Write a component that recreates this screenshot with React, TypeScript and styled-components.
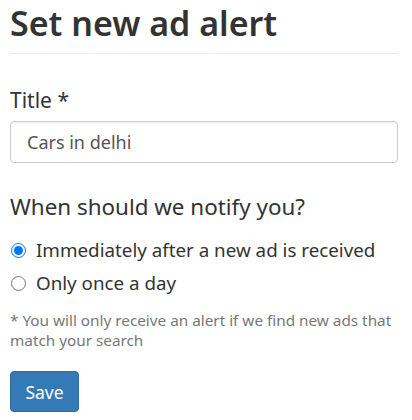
import React, { useState } from 'react'
import styled, { createGlobalStyle } from 'styled-components'

const GlobalStyle = createGlobalStyle`
  body {
    margin: 0;
    background: #fff;
    font-family: "Noto Sans", "Open Sans", sans-serif;
    color: #333;
  }
`

const Page = styled.div`
  padding: 0 14px 0 10px;
`

const Heading = styled.h1`
  margin: 0;
  padding: 3px 0 10px;
  font-size: 34px;
  font-weight: 600;
  line-height: 40px;
  color: #333;
  border-bottom: 1px solid #eee;
`

const Form = styled.form`
  display: flex;
  flex-direction: column;
  padding-top: 32px;
`

const Label = styled.label`
  font-size: 21px;
  line-height: 28px;
  margin-bottom: 7px;
`

const Input = styled.input`
  box-sizing: border-box;
  height: 42px;
  padding: 0 16px;
  font: inherit;
  font-size: 18px;
  color: #555;
  border: 1px solid #ccc;
  border-radius: 4px;
  box-shadow: inset 0 1px 1px rgba(0, 0, 0, 0.075);
`

const Legend = styled.div`
  font-size: 22.4px;
  line-height: 30px;
  margin: 29px 0 12px;
`

const RadioRow = styled.label`
  display: flex;
  align-items: center;
  gap: 10px;
  font-size: 18.8px;
  line-height: 33px;
  color: #333;
`

const Radio = styled.input`
  margin: 0 0 0 1px;
  width: 15px;
  height: 15px;
  accent-color: #0075ff;
`

const Note = styled.p`
  margin: 10px 0 0;
  font-size: 15.3px;
  line-height: 20px;
  color: #777;
`

const Button = styled.button`
  align-self: flex-start;
  margin-top: 21px;
  height: 41px;
  width: 69px;
  padding: 0;
  font: inherit;
  font-size: 17.5px;
  color: #fff;
  background: #337ab7;
  border: 1px solid #2e6da4;
  border-radius: 4px;
`

export default function App() {
  const [when, setWhen] = useState('now')
  return (
    <Page>
      <GlobalStyle />
      <Heading>Set new ad alert</Heading>
      <Form onSubmit={e => e.preventDefault()}>
        <Label htmlFor="title">Title *</Label>
        <Input id="title" defaultValue="Cars in delhi" />
        <Legend>When should we notify you?</Legend>
        <RadioRow>
          <Radio type="radio" name="when" checked={when === 'now'} onChange={() => setWhen('now')} />
          Immediately after a new ad is received
        </RadioRow>
        <RadioRow>
          <Radio type="radio" name="when" checked={when === 'day'} onChange={() => setWhen('day')} />
          Only once a day
        </RadioRow>
        <Note>* You will only receive an alert if we find new ads that match your search</Note>
        <Button type="submit">Save</Button>
      </Form>
    </Page>
  )
}
